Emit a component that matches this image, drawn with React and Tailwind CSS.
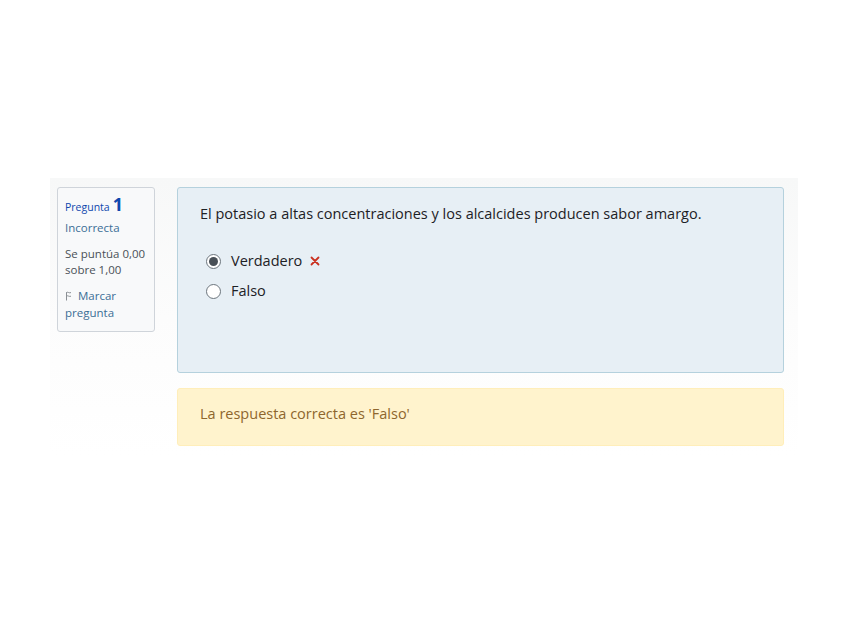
export default function App() {
  return (
    <div className="w-[848px] h-[636px] bg-white" style={{ fontFamily: '"Open Sans", Arial, sans-serif' }}>
      <div className="pt-[178px] pl-[50px]">
        <div className="w-[748px] pt-[9px] pb-[10px] pl-[7px] bg-gradient-to-b from-[#f7f8f8] via-[#fcfcfc] to-white flex gap-[22px]">
          <div className="w-[98px] h-[145px] shrink-0 bg-[#f8f9fa] border border-[#cfd4da] rounded-[3px] px-[7px] pt-[6px] text-[11.5px] leading-[16px] text-[#1d2125]">
            <div className="flex items-baseline gap-[3px] text-[#0f47ad]">
              <span className="text-[10.5px]">Pregunta</span>
              <span className="text-[18px] font-bold leading-[20px]">1</span>
            </div>
            <div className="mt-[5px] text-[#3b6e96]">Incorrecta</div>
            <div className="mt-[10px] text-[#495057]">Se puntúa 0,00 sobre 1,00</div>
            <div className="mt-[9px] text-[#3b6e96] flex items-start leading-[17px]">
              <span>
                <svg width="9" height="10" viewBox="0 0 9 10" className="inline-block mr-[4px] align-[-1px]">
                  <path d="M1.5 9.5V1.2M1.5 1.5C3 0.6 4 2.4 6 1.6 M1.5 5C3 4.2 4 6 6 5.2" fill="none" stroke="#8a8f94" strokeWidth="1" />
                </svg>
                Marcar pregunta
              </span>
            </div>
          </div>
          <div className="w-[607px] flex flex-col gap-[15px]">
            <div className="h-[186px] bg-[#e7eff5] border border-[#b5d1dd] rounded-[3px] px-[22px] pt-[16px] text-[14.5px] text-[#1d2125]">
              <p className="leading-[20px]">El potasio a altas concentraciones y los alcalcides producen sabor amargo.</p>
              <div className="mt-[27px] flex flex-col gap-[10px] pl-[6px]">
                <label className="flex items-center gap-[10px] leading-[20px]">
                  <span className="w-[15px] h-[15px] rounded-full border border-[#6c757d] bg-white flex items-center justify-center">
                    <span className="w-[9px] h-[9px] rounded-full bg-[#495057]"></span>
                  </span>
                  <span>Verdadero</span>
                  <svg width="10" height="10" viewBox="0 0 10 10" className="-ml-[2px]">
                    <path d="M1.5 1.5L8.5 8.5M8.5 1.5L1.5 8.5" stroke="#ca3120" strokeWidth="1.8" strokeLinecap="round" />
                  </svg>
                </label>
                <label className="flex items-center gap-[10px] leading-[20px]">
                  <span className="w-[15px] h-[15px] rounded-full border border-[#6c757d] bg-white"></span>
                  <span>Falso</span>
                </label>
              </div>
            </div>
            <div className="h-[58px] bg-[#fff3cd] border border-[#ffeeba] rounded-[3px] px-[22px] pb-[6px] flex items-center text-[14.5px] text-[#8e662e]">
              La respuesta correcta es 'Falso'
            </div>
          </div>
        </div>
      </div>
    </div>
  );
}
